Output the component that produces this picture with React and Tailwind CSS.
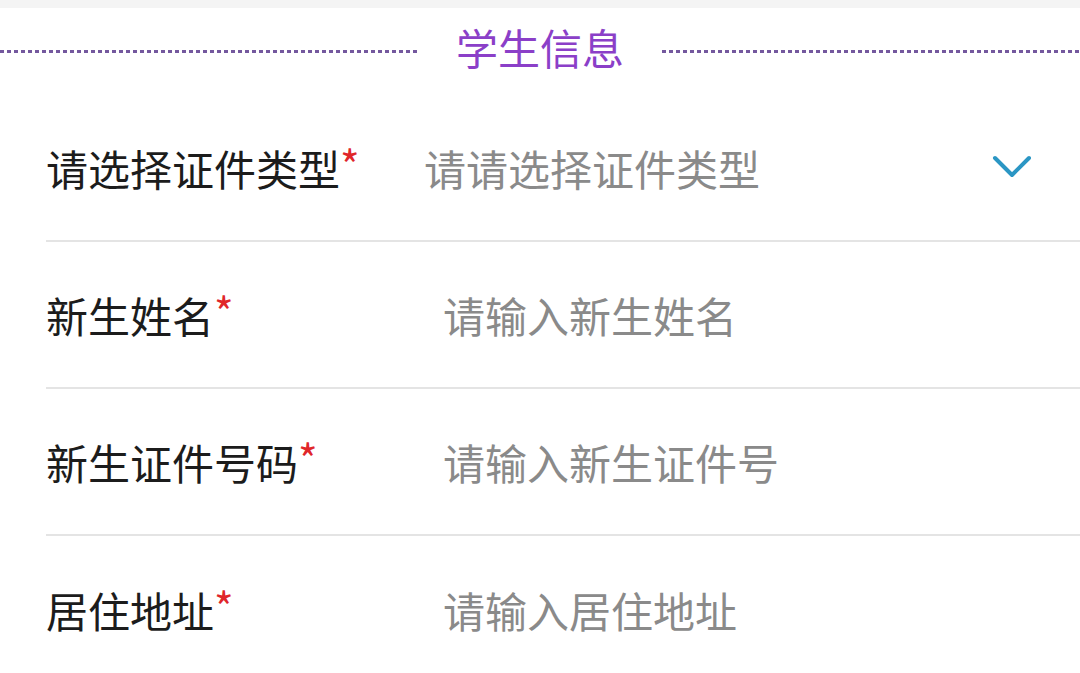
const rows = [
  { label: '新生姓名', placeholder: '请输入新生姓名' },
  { label: '新生证件号码', placeholder: '请输入新生证件号' },
  { label: '居住地址', placeholder: '请输入居住地址' },
];

function Label({ text }) {
  return (
    <div className="w-[397px] shrink-0 text-[42px] text-[#1c1c1c]">
      {text}
      <span className="text-[#e0262a] relative -top-1">*</span>
    </div>
  );
}

export default function App() {
  const font = { fontFamily: '"Noto Sans CJK SC", "Noto Sans", sans-serif' };
  return (
    <div className="w-[1080px] h-[673px] bg-white overflow-hidden" style={font}>
      <div className="h-2 bg-[#f4f4f4]" />
      <div className="h-[86px] flex items-center">
        <div className="flex-1 h-[3px] bg-[repeating-linear-gradient(90deg,#74589e_0_4px,transparent_4px_7px)]" />
        <div className="mx-[38px] text-[42px] leading-none text-[#8b3fc8] -mt-2">学生信息</div>
        <div className="flex-1 h-[3px] bg-[repeating-linear-gradient(90deg,#74589e_0_4px,transparent_4px_7px)]" />
      </div>
      <div className="ml-[46px]">
        <div className="h-[148px] flex items-center border-b-2 border-[#e4e4e4]">
          <div className="w-[378px] shrink-0 text-[42px] text-[#1c1c1c]">
            请选择证件类型<span className="text-[#e0262a] relative -top-1">*</span>
          </div>
          <div className="flex-1 text-[42px] text-[#8a8a8a]">请请选择证件类型</div>
          <svg width="40" height="26" viewBox="0 0 40 26" className="mr-[48px]">
            <path d="M3 4 L20 21 L37 4" fill="none" stroke="#2b96c4" strokeWidth="4" strokeLinecap="round" strokeLinejoin="round" />
          </svg>
        </div>
        {rows.map((r, i) => (
          <div
            key={r.label}
            className={`h-[147px] flex items-center ${i < rows.length - 1 ? 'border-b-2 border-[#e4e4e4]' : ''}`}
          >
            <Label text={r.label} />
            <div className="flex-1 text-[42px] text-[#8a8a8a]">{r.placeholder}</div>
          </div>
        ))}
      </div>
    </div>
  );
}
